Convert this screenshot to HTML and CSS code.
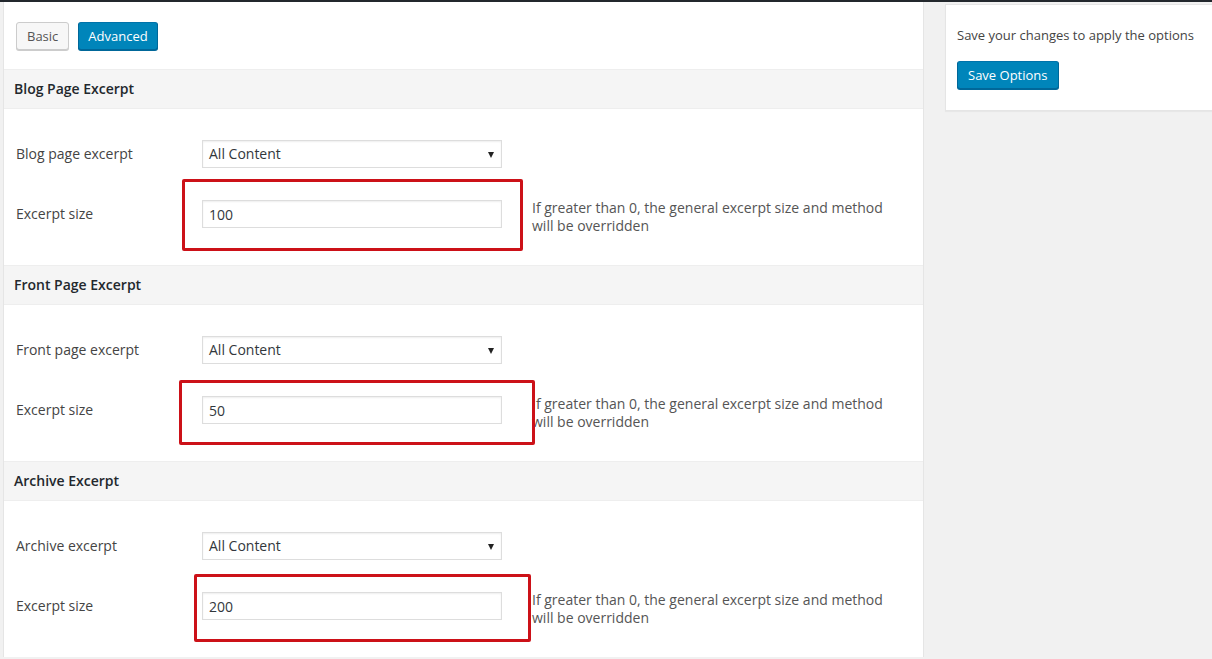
FILE: index.html
```html
<!DOCTYPE html>
<html lang="en">
<head>
    <meta charset="UTF-8">
    <title>Excerpt Options</title>
    <link rel="stylesheet" href="styles.css">
</head>
<body>
    <div class="wrap">
        <div class="main-panel">
            <div class="tabs">
                <button class="tab">Basic</button>
                <button class="tab tab-active">Advanced</button>
            </div>

            <div class="section">
                <h3 class="section-title">Blog Page Excerpt</h3>
                <div class="section-body">
                    <div class="row">
                        <label class="row-label">Blog page excerpt</label>
                        <div class="field">
                            <div class="select-box">All Content</div>
                        </div>
                    </div>
                    <div class="row">
                        <label class="row-label">Excerpt size</label>
                        <div class="field">
                            <input class="text-input" type="text" value="100">
                            <span class="mark mark-1"></span>
                        </div>
                        <p class="desc">If greater than 0, the general excerpt size and method will be overridden</p>
                    </div>
                </div>
            </div>

            <div class="section">
                <h3 class="section-title">Front Page Excerpt</h3>
                <div class="section-body">
                    <div class="row">
                        <label class="row-label">Front page excerpt</label>
                        <div class="field">
                            <div class="select-box">All Content</div>
                        </div>
                    </div>
                    <div class="row">
                        <label class="row-label">Excerpt size</label>
                        <div class="field">
                            <input class="text-input" type="text" value="50">
                            <span class="mark mark-2"></span>
                        </div>
                        <p class="desc">If greater than 0, the general excerpt size and method will be overridden</p>
                    </div>
                </div>
            </div>

            <div class="section">
                <h3 class="section-title">Archive Excerpt</h3>
                <div class="section-body">
                    <div class="row">
                        <label class="row-label">Archive excerpt</label>
                        <div class="field">
                            <div class="select-box">All Content</div>
                        </div>
                    </div>
                    <div class="row">
                        <label class="row-label">Excerpt size</label>
                        <div class="field">
                            <input class="text-input" type="text" value="200">
                            <span class="mark mark-3"></span>
                        </div>
                        <p class="desc">If greater than 0, the general excerpt size and method will be overridden</p>
                    </div>
                </div>
            </div>
        </div>

        <div class="side-panel">
            <p class="side-text">Save your changes to apply the options</p>
            <button class="btn-primary">Save Options</button>
        </div>
    </div>
</body>
</html>
```

FILE: styles.css
```css
* { margin: 0; padding: 0; box-sizing: border-box; }
body {
    background: #f1f1f1;
    border-top: 2px solid #23282d;
    font-family: 'Open Sans', 'Noto Sans', sans-serif;
    font-size: 13px;
    color: #444;
    overflow: hidden;
}
.wrap { display: flex; align-items: flex-start; gap: 21px; padding-left: 3px; }

.main-panel {
    width: 921px;
    flex-shrink: 0;
    background: #fff;
    border-left: 1px solid #e5e5e5;
    border-right: 1px solid #e5e5e5;
}
.tabs { display: flex; gap: 9px; padding: 20px 12px 19px; }
.tab {
    height: 28px;
    padding: 0 10px;
    font-family: inherit;
    font-size: 13px;
    color: #555;
    background: #f7f7f7;
    border: 1px solid #ccc;
    border-radius: 3px;
    box-shadow: 0 1px 0 #ccc;
}
.tab-active {
    padding: 0 9px;
    color: #fff;
    background: #0085ba;
    border-color: #0073aa #006799 #006799;
    box-shadow: 0 1px 0 #006799;
}

.section-title {
    height: 40px;
    line-height: 38px;
    padding: 0 10px;
    font-size: 14px;
    font-weight: 600;
    color: #23282d;
    background: #f5f5f5;
    border-top: 1px solid #eee;
    border-bottom: 1px solid #eee;
}
.section-body { display: flex; flex-direction: column; gap: 32px; padding: 31px 12px 37px; }
.row { display: flex; align-items: center; height: 28px; }
.row-label { width: 186px; flex-shrink: 0; font-size: 14px; padding-bottom: 2px; }
.field { position: relative; width: 300px; flex-shrink: 0; }

.select-box, .text-input {
    display: block;
    width: 100%;
    height: 28px;
    padding: 0 6px;
    line-height: 26px;
    font-family: inherit;
    font-size: 14px;
    color: #32373c;
    background: #fff;
    border: 1px solid #ddd;
    box-shadow: inset 0 1px 2px rgba(0, 0, 0, 0.07);
}
.select-box { position: relative; }
.select-box::after {
    content: "";
    position: absolute;
    right: 7px;
    top: 11px;
    border-left: 3px solid transparent;
    border-right: 3px solid transparent;
    border-top: 6px solid #222;
}
.text-input { outline: none; }

.desc { flex-shrink: 0; width: 360px; margin-left: 30px; line-height: 18px; font-size: 14px; color: #555; padding-top: 5px; }

.mark {
    position: absolute;
    border: 3px solid #cc1118;
    border-radius: 2px;
}
.mark-1 { left: -20px; top: -21px; width: 341px; height: 72px; }
.mark-2 { left: -23px; top: -16px; width: 356px; height: 65px; }
.mark-3 { left: -8px; top: -18px; width: 337px; height: 68px; }

.side-panel {
    width: 290px;
    flex-shrink: 0;
    margin-top: 2px;
    padding: 21px 11px 21px;
    background: #fff;
    border: 1px solid #e5e5e5;
    box-shadow: 0 1px 1px rgba(0, 0, 0, 0.04);
}
.side-text { line-height: 18px; font-size: 13px; color: #444; margin-bottom: 17px; }
.btn-primary {
    height: 28px;
    padding: 0 10px;
    font-family: inherit;
    font-size: 13px;
    color: #fff;
    background: #0085ba;
    border: 1px solid #0073aa;
    border-color: #0073aa #006799 #006799;
    border-radius: 3px;
    box-shadow: 0 1px 0 #006799;
}
```
